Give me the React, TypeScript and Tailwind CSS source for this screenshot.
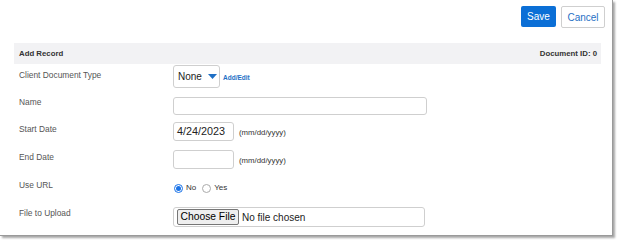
import React from 'react';

const labelCls = 'w-[159px] shrink-0 pl-[5px] text-[8.4px] leading-[10px] text-[#555]';
const boxCls = 'border border-[#cfcfcf] rounded-[3px] bg-white';

function Row({ label, labelPt, ctrlPt, children }: { label: string; labelPt: string; ctrlPt: string; children: React.ReactNode }) {
  return (
    <div className="flex h-[28px]">
      <div className={`${labelCls} ${labelPt}`}>{label}</div>
      <div className={`flex items-center ${ctrlPt}`}>{children}</div>
    </div>
  );
}

function Radio({ checked }: { checked?: boolean }) {
  return checked ? (
    <span className="flex h-[9px] w-[9px] items-center justify-center rounded-full border border-[#1a73e8] bg-white">
      <span className="h-[5px] w-[5px] rounded-full bg-[#1a73e8]" />
    </span>
  ) : (
    <span className="h-[9px] w-[9px] rounded-full border border-[#aaa] bg-white" />
  );
}

export default function App() {
  return (
    <div className="h-[240px] w-[617px] overflow-hidden bg-white" style={{ fontFamily: '"Liberation Sans", Arial, sans-serif' }}>
      <div className="h-[236px] w-[613px] border-r border-b border-[#9a9a9a] shadow-[2px_2px_2px_rgba(0,0,0,0.35)] bg-white pl-[14px] pr-[11px]">
        {/* Actions */}
        <div className="mr-[-4px] flex h-[43px] justify-end gap-[5px] pt-[6px]">
          <button className="h-[21px] w-[35px] rounded-[2px] bg-[#0b6fd6] text-[10px] text-white">Save</button>
          <button className="h-[22px] w-[44px] rounded-[2px] border border-[#cfcfcf] bg-white text-[10px] text-[#1f6fc5]">Cancel</button>
        </div>

        {/* Header */}
        <div className="flex h-[21px] items-center justify-between bg-[#f2f2f4] pl-[5px] pr-[4px] text-[7.8px] font-bold text-[#333]">
          <span>Add Record</span>
          <span>Document ID: 0</span>
        </div>

        <Row label="Client Document Type" labelPt="pt-[6px]" ctrlPt="pt-[1px] items-start">
          <div className={`${boxCls} flex h-[23px] w-[47px] items-center pl-[4px] text-[10px] text-[#222]`}>
            None
            <svg width="9" height="5" viewBox="0 0 9 5" className="ml-[6px]">
              <path d="M0 0h9L4.5 5z" fill="#1f6fc5" />
            </svg>
          </div>
          <a className="ml-[3px] mt-[8px] text-[6.5px] font-bold text-[#1f6fc5]">Add/Edit</a>
        </Row>

        <Row label="Name" labelPt="pt-[5px]" ctrlPt="pt-[5px] items-start">
          <div className={`${boxCls} h-[18px] w-[254px]`} />
        </Row>

        <Row label="Start Date" labelPt="pt-[4px]" ctrlPt="pt-[2px] items-start">
          <div className={`${boxCls} flex h-[19px] w-[61px] items-center pl-[3px] text-[10.8px] text-[#222]`}>4/24/2023</div>
          <span className="ml-[5px] mt-[5px] text-[7.8px] text-[#333]">(mm/dd/yyyy)</span>
        </Row>

        <Row label="End Date" labelPt="pt-[4px]" ctrlPt="pt-[2px] items-start">
          <div className={`${boxCls} h-[19px] w-[61px]`} />
          <span className="ml-[5px] mt-[5px] text-[7.8px] text-[#333]">(mm/dd/yyyy)</span>
        </Row>

        <Row label="Use URL" labelPt="pt-[4px]" ctrlPt="pt-[6px] items-start">
          <span className="ml-[1px] flex items-center gap-[3px] text-[8px] text-[#333]">
            <Radio checked />
            <span>No</span>
          </span>
          <span className="ml-[6px] flex items-center gap-[3px] text-[8px] text-[#333]">
            <Radio />
            <span>Yes</span>
          </span>
        </Row>

        <Row label="File to Upload" labelPt="pt-[4px]" ctrlPt="pt-[3px] items-start">
          <div className={`${boxCls} flex h-[20px] w-[252px] items-center pl-[3px] text-[10px] text-[#222]`}>
            <span className="flex h-[16px] w-[62px] items-center justify-center rounded-[2px] border border-[#767676] bg-[#efefef] text-[10.3px] text-black">Choose File</span>
            <span className="ml-[3px]">No file chosen</span>
          </div>
        </Row>
      </div>
    </div>
  );
}
